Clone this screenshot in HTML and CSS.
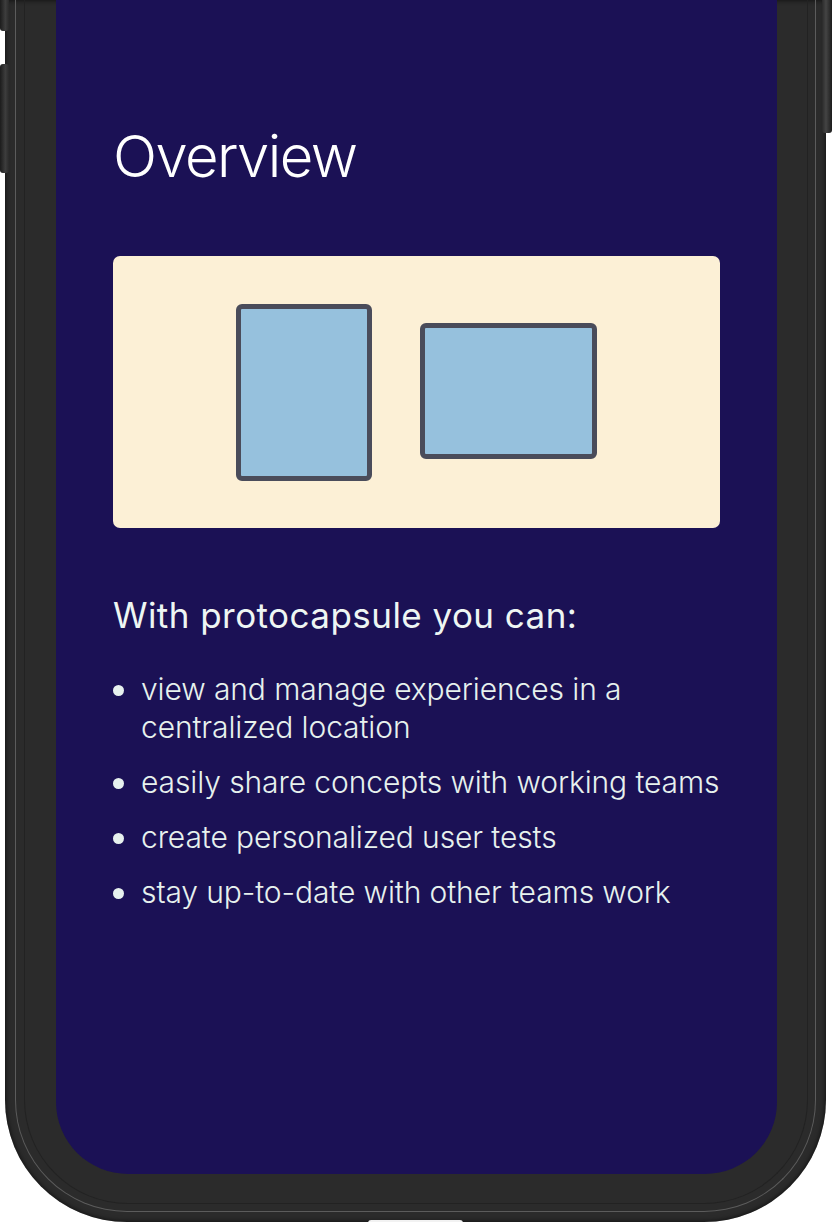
FILE: index.html
```html
<!DOCTYPE html>
<html lang="en">
<head>
  <meta charset="UTF-8" />
  <meta name="viewport" content="width=device-width, initial-scale=1.0" />
  <title>Overview | protocapsule</title>
  <link rel="stylesheet" href="styles.css">
</head>
<body>

  <!-- phone mockup -->
  <div class="phone">
    <span class="side-btn side-btn-top"></span>
    <span class="side-btn side-btn-volume"></span>
    <span class="side-btn side-btn-power"></span>
    <span class="port"></span>

    <div class="phone-ring">
      <div class="phone-rim">
        <main class="screen">
          <h1 class="title">Overview</h1>

          <div class="hero">
            <div class="device device-portrait"></div>
            <div class="device device-landscape"></div>
          </div>

          <h2 class="subtitle">With protocapsule you can:</h2>

          <ul class="features">
            <li>view and manage experiences in a centralized location</li>
            <li>easily share concepts with working teams</li>
            <li>create personalized user tests</li>
            <li>stay up-to-date with other teams work</li>
          </ul>
        </main>
      </div>
    </div>
  </div>

</body>
</html>
```

FILE: styles.css
```css
:root {
  --screen-bg: #1b1155;
  --frame: #2b2b2b;
  --card-bg: #fcf0d6;
  --device-fill: #96c1dd;
  --device-stroke: #4a4c5a;
  --text-light: #e7f1ee;
}

* {
  margin: 0;
  padding: 0;
  box-sizing: border-box;
}

html,
body {
  height: 100%;
}

body {
  background: #fff;
  font-family: Inter, 'Noto Sans', sans-serif;
  overflow: hidden;
}

/* phone frame */
.phone {
  position: relative;
  width: 821px;
  height: 1222px;
  margin-left: 5px;
  padding: 0 10px 10px 10px;
  background: var(--frame);
  border-radius: 0 0 122px 122px;
  box-shadow: inset 0 0 4px 1px rgba(0, 0, 0, 0.55);
}

.phone-ring {
  height: 100%;
  border: 1px solid #5c5c5c;
  border-top: none;
  border-radius: 0 0 112px 112px;
  padding: 0 7px 7px 8px;
}

.phone-rim {
  height: 100%;
  border: 1px solid #222;
  border-top: none;
  border-radius: 0 0 104px 104px;
  padding: 0 30px 29px 31px;
}

.side-btn {
  position: absolute;
  width: 9px;
  background: linear-gradient(90deg, #1c1c1c, #3d3d3d 60%, #2a2a2a);
  border-radius: 3px;
}

.side-btn-top {
  left: -5px;
  top: -6px;
  height: 37px;
}

.side-btn-volume {
  left: -5px;
  top: 64px;
  height: 109px;
}

.side-btn-power {
  right: -6px;
  top: -6px;
  height: 139px;
  width: 10px;
  background: linear-gradient(90deg, #2a2a2a, #444 40%, #1c1c1c);
}

.port {
  position: absolute;
  left: 363px;
  bottom: -1px;
  width: 95px;
  height: 3px;
  background: #f2f2f2;
  border-radius: 3px 3px 0 0;
}

/* screen */
.screen {
  height: 100%;
  background: var(--screen-bg);
  border-radius: 0 0 72px 72px;
  padding: 121px 57px 0 57px;
  color: var(--text-light);
}

.title {
  font-size: 58px;
  line-height: 70px;
  font-weight: 300;
  color: #fff;
  letter-spacing: -1.6px;
}

.hero {
  margin-top: 65px;
  height: 272px;
  background: var(--card-bg);
  border-radius: 7px;
  display: flex;
  justify-content: center;
  align-items: center;
  gap: 50px;
}

.device {
  background: var(--device-fill);
  border: 5px solid var(--device-stroke);
  border-radius: 6px;
}

.device-portrait {
  width: 136px;
  height: 177px;
}

.device-landscape {
  width: 177px;
  height: 136px;
  margin-left: -2px;
  margin-bottom: 3px;
}

.subtitle {
  margin-top: 66px;
  font-size: 35px;
  line-height: 42px;
  font-weight: 400;
  letter-spacing: 0.45px;
  color: #eef6f3;
}

.features {
  list-style: none;
  margin-top: 34px;
  margin-right: -8px;
  display: flex;
  flex-direction: column;
  gap: 17px;
}

.features li {
  display: flex;
  gap: 17px;
  font-size: 30px;
  line-height: 38px;
  font-weight: 300;
  letter-spacing: -0.1px;
}

.features li::before {
  content: "";
  flex: 0 0 11px;
  height: 11px;
  margin-top: 15px;
  border-radius: 50%;
  background: var(--text-light);
}
```
